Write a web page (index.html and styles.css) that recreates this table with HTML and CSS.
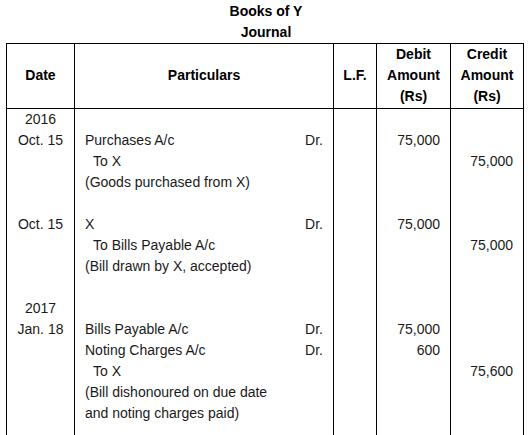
FILE: index.html
```html
<!DOCTYPE html>
<html lang="en">
<head>
<meta charset="utf-8">
<title>Books of Y - Journal</title>
<link rel="stylesheet" href="styles.css">
</head>
<body>
<div class="title">
  <div>Books of Y</div>
  <div>Journal</div>
</div>
<table class="journal">
  <colgroup>
    <col class="c-date">
    <col class="c-part">
    <col class="c-lf">
    <col class="c-dr">
    <col class="c-cr">
  </colgroup>
  <thead>
    <tr>
      <th>Date</th>
      <th>Particulars</th>
      <th>L.F.</th>
      <th>Debit<br>Amount<br>(Rs)</th>
      <th>Credit<br>Amount<br>(Rs)</th>
    </tr>
  </thead>
  <tbody>
    <tr><td class="date">2016</td><td></td><td></td><td></td><td></td></tr>
    <tr><td class="date">Oct. 15</td><td><div class="part"><span>Purchases A/c</span><span>Dr.</span></div></td><td></td><td class="amt">75,000</td><td></td></tr>
    <tr><td></td><td><div class="to">To X</div></td><td></td><td></td><td class="amt">75,000</td></tr>
    <tr><td></td><td>(Goods purchased from X)</td><td></td><td></td><td></td></tr>
    <tr><td></td><td></td><td></td><td></td><td></td></tr>
    <tr><td class="date">Oct. 15</td><td><div class="part"><span>X</span><span>Dr.</span></div></td><td></td><td class="amt">75,000</td><td></td></tr>
    <tr><td></td><td><div class="to">To Bills Payable A/c</div></td><td></td><td></td><td class="amt">75,000</td></tr>
    <tr><td></td><td>(Bill drawn by X, accepted)</td><td></td><td></td><td></td></tr>
    <tr><td></td><td></td><td></td><td></td><td></td></tr>
    <tr><td class="date">2017</td><td></td><td></td><td></td><td></td></tr>
    <tr><td class="date">Jan. 18</td><td><div class="part"><span>Bills Payable A/c</span><span>Dr.</span></div></td><td></td><td class="amt">75,000</td><td></td></tr>
    <tr><td></td><td><div class="part"><span>Noting Charges A/c</span><span>Dr.</span></div></td><td></td><td class="amt">600</td><td></td></tr>
    <tr><td></td><td><div class="to">To X</div></td><td></td><td></td><td class="amt">75,600</td></tr>
    <tr><td></td><td>(Bill dishonoured on due date</td><td></td><td></td><td></td></tr>
    <tr><td></td><td>and noting charges paid)</td><td></td><td></td><td></td></tr>
    <tr><td></td><td></td><td></td><td></td><td></td></tr>
  </tbody>
</table>
</body>
</html>
```

FILE: styles.css
```css
html, body {
  margin: 0;
  padding: 0;
  background: #fff;
}
body {
  font-family: "Liberation Sans", Arial, sans-serif;
  font-size: 14px;
  line-height: 21px;
  color: #1a1a1a;
  height: 435px;
  overflow: hidden;
}
.title {
  text-align: center;
  font-weight: bold;
  color: #000;
  padding-top: 1px;
}
.journal {
  margin-left: 6px;
  width: 518px;
  table-layout: fixed;
  border-collapse: collapse;
}
.c-date { width: 68px; }
.c-part { width: 259px; }
.c-lf { width: 43px; }
.c-dr { width: 74px; }
.c-cr { width: 73px; }
.journal th {
  border: 1px solid #000;
  font-weight: bold;
  color: #000;
  text-align: center;
  vertical-align: middle;
  padding: 0 0 1px;
  line-height: 21px;
}
.journal td {
  border-left: 1px solid #000;
  border-right: 1px solid #000;
  padding: 0 10px;
  height: 21px;
  line-height: 21px;
  white-space: nowrap;
  vertical-align: top;
}
.journal td.date {
  text-align: center;
  padding: 0;
}
.journal td.amt {
  text-align: right;
}
.part {
  display: flex;
  justify-content: space-between;
}
.to {
  padding-left: 8px;
}
```
